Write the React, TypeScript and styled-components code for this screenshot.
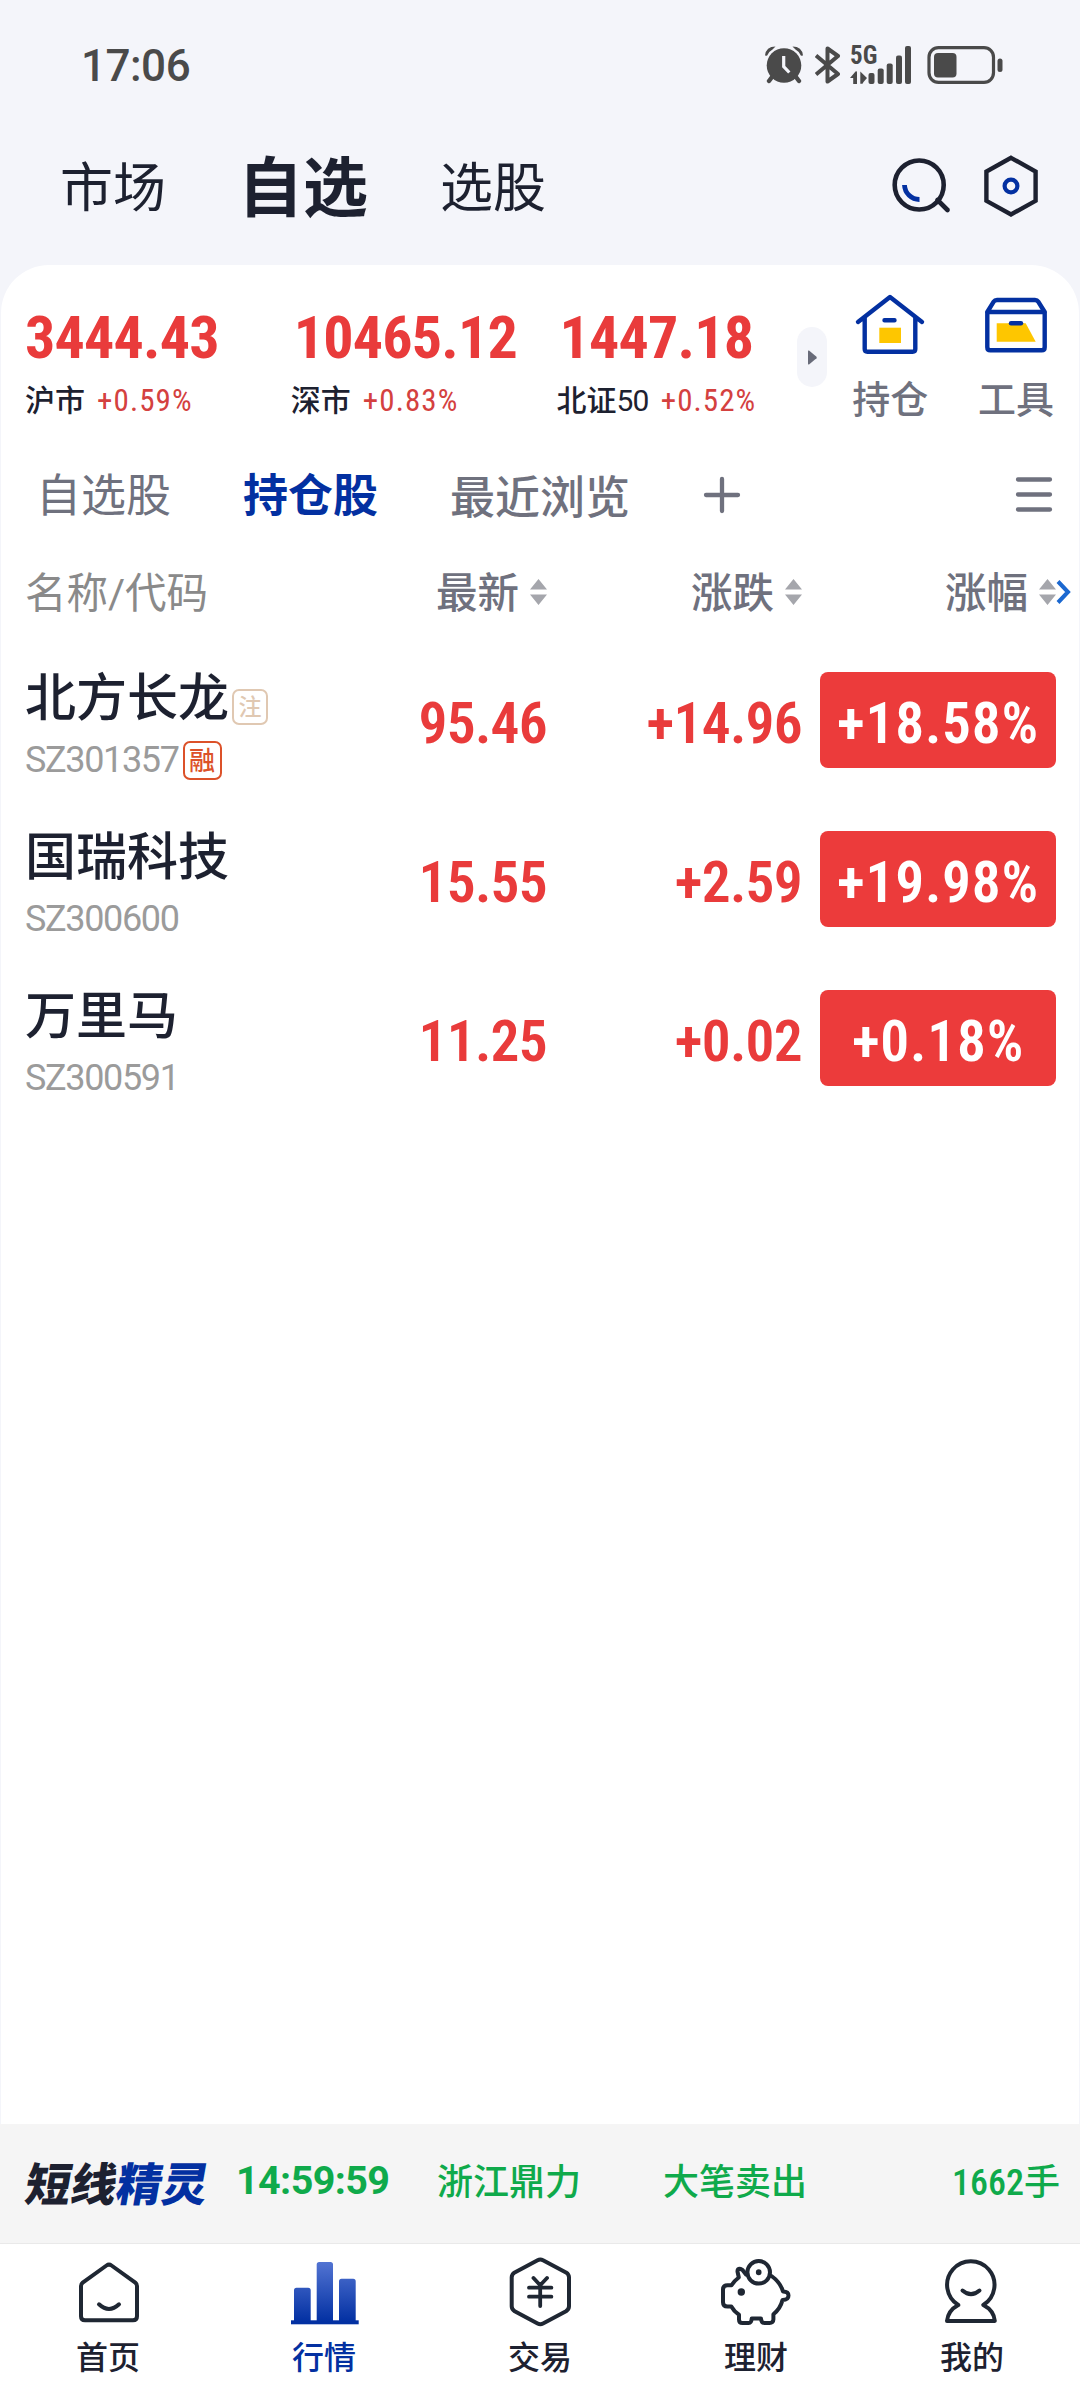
import React from 'react';
import styled, { createGlobalStyle } from 'styled-components';

const color = {
  page: '#f4f5fa',
  ink: '#1d2130',
  blue: '#0330a1',
  red: '#e93b3b',
  badge: '#ec3b3b',
  green: '#0faa4b',
  grey: '#6f717e',
  status: '#4a4a4a',
  yellow: '#fec600',
};

const GlobalStyle = createGlobalStyle`
  * { box-sizing: border-box; }
  body {
    margin: 0;
    background: ${color.page};
    font-family: Roboto, "Noto Sans CJK SC", sans-serif;
    color: ${color.ink};
  }
  svg { display: block; flex: none; }
`;

const Screen = styled.div`
  width: 1080px;
  height: 2388px;
  display: flex;
  flex-direction: column;
  overflow: hidden;
  white-space: nowrap;
`;

/* ---------- status bar ---------- */

const StatusBar = styled.div`
  height: 130px;
  padding: 0 76px 0 81px;
  display: flex;
  align-items: center;
  justify-content: space-between;
`;

const Clock = styled.span`
  font-size: 44px;
  font-weight: 500;
  letter-spacing: -0.5px;
  padding-top: 1px;
  color: ${color.status};
`;

const StatusIcons = styled.div`
  display: flex;
  align-items: center;
`;

const Signal = styled.div`
  width: 38px;
  height: 40px;
  margin: 0 39px 0 9px;
  position: relative;
`;

const SignalLabel = styled.span`
  position: absolute;
  left: 0;
  top: 0;
  font-size: 25px;
  line-height: 21px;
  font-weight: 700;
  font-stretch: 75%;
  color: ${color.status};
`;

const SignalBars = styled.svg`
  position: absolute;
  left: 0;
  top: 0;
`;

/* ---------- header ---------- */

const Header = styled.header`
  height: 112px;
  margin-bottom: 23px;
  padding: 1px 38px 0 60px;
  display: flex;
  align-items: center;
`;

const HeaderTab = styled.span<{ $active?: boolean }>`
  font-size: ${(p) => (p.$active ? 65 : 53)}px;
  font-weight: ${(p) => (p.$active ? 700 : 400)};
  line-height: 80px;
  margin-right: ${(p) => (p.$active ? 72 : 72)}px;
  padding-top: 4px;
`;

const HeaderActions = styled.div`
  margin-left: auto;
  display: flex;
  gap: 27px;
`;

/* ---------- main card ---------- */

const Card = styled.main`
  flex: 1;
  margin: 0 1px;
  background: #fff;
  border-radius: 48px 48px 0 0;
  display: flex;
  flex-direction: column;
`;

const IndexBar = styled.section`
  height: 165px;
  padding-left: 24px;
  display: flex;
`;

const IndexItem = styled.div<{ $width: number }>`
  width: ${(p) => p.$width}px;
  padding-top: 43px;
`;

const IndexValue = styled.div<{ $indent: number }>`
  padding-left: ${(p) => p.$indent}px;
  font-size: 60px;
  line-height: 60px;
  font-weight: 700;
  font-stretch: 75%;
  letter-spacing: -0.8px;
  color: ${color.red};
`;

const IndexMeta = styled.div`
  margin-top: 13px;
  display: flex;
  align-items: center;
  font-size: 30px;
  line-height: 40px;
  font-weight: 500;
`;

const IndexDigits = styled.span`
  font-weight: 400;
  letter-spacing: -0.8px;
`;

const IndexChange = styled.span`
  margin-left: 12px;
  font-size: 31px;
  font-weight: 400;
  font-stretch: 75%;
  letter-spacing: 1.1px;
  color: #d4413f;
`;

const Expand = styled.button`
  width: 30px;
  height: 60px;
  margin-top: 62px;
  padding: 0;
  border: 0;
  border-radius: 15px;
  background: ${color.page};
  display: flex;
  align-items: center;
  justify-content: center;
`;

const Shortcut = styled.div`
  width: 126px;
  padding-top: 26px;
  display: flex;
  flex-direction: column;
  align-items: center;
  font-size: 38px;
  line-height: 50px;
  font-weight: 500;
  color: ${color.grey};
  gap: 18px;
`;

/* ---------- list tabs ---------- */

const Tabs = styled.nav`
  height: 130px;
  padding: 0 26px 0 35px;
  display: flex;
  align-items: center;
`;

const Tab = styled.span<{ $active?: boolean; $medium?: boolean; $gap: number }>`
  font-size: 45px;
  line-height: 60px;
  font-weight: ${(p) => (p.$active ? 700 : p.$medium ? 500 : 400)};
  color: ${(p) => (p.$active ? color.blue : color.grey)};
  margin-right: ${(p) => p.$gap}px;
  padding-top: ${(p) => (p.$medium ? 7 : 3)}px;
`;

const MenuButton = styled.div`
  margin-left: auto;
`;

/* ---------- table ---------- */

const tableColumns = '265px 257px 255px 18px 236px';

const TableHead = styled.div`
  height: 80px;
  padding: 0 0 16px 24px;
  display: grid;
  grid-template-columns: ${tableColumns} 15px;
  align-items: center;
  font-size: 41.5px;
  line-height: 60px;
  font-weight: 500;
  color: ${color.grey};
`;

const HeadName = styled.span`
  color: #8a8a8a;
  font-weight: 400;
  padding-top: 4px;
`;

const HeadCell = styled.span<{ $wide?: boolean }>`
  grid-column: ${(p) => (p.$wide ? 'span 2' : 'auto')};
  display: flex;
  align-items: center;
  justify-content: flex-end;
  gap: 11px;
`;

const HeadLabel = styled.span`
  padding-top: 4px;
`;

const Row = styled.div`
  height: 159px;
  padding-left: 24px;
  display: grid;
  grid-template-columns: ${tableColumns};
`;

const Stock = styled.div`
  padding-top: 29px;
`;

const StockName = styled.div`
  display: flex;
  align-items: center;
  font-size: 51px;
  line-height: 60px;
  font-weight: 500;
`;

const StockCode = styled.div`
  margin-top: 11px;
  height: 40px;
  display: flex;
  align-items: center;
  font-size: 36px;
  letter-spacing: -1.35px;
  color: #9b9b9b;
`;

const Tag = styled.span<{ $tone: string; $size: number; $raise?: number; $gap: number }>`
  width: ${(p) => p.$size}px;
  height: ${(p) => p.$size}px;
  margin: ${(p) => p.$raise ?? 0}px 0 0 ${(p) => p.$gap}px;
  border: 2px solid ${(p) => p.$tone};
  border-radius: 7px;
  display: flex;
  align-items: center;
  justify-content: center;
  font-size: ${(p) => p.$size - 13}px;
  line-height: 1;
  letter-spacing: 0;
  padding-top: 1px;
  font-weight: 500;
  color: ${(p) => p.$tone};
`;

const Quote = styled.div`
  padding-top: 54px;
  text-align: right;
  font-size: 57.5px;
  line-height: 60px;
  font-weight: 600;
  font-stretch: 75%;
  letter-spacing: -0.7px;
  color: ${color.red};
`;

const Badge = styled.div`
  grid-column: 5;
  height: 96px;
  margin-top: 32px;
  padding-top: 7px;
  border-radius: 8px;
  background: ${color.badge};
  display: flex;
  align-items: center;
  justify-content: center;
  font-size: 57.5px;
  font-weight: 600;
  font-stretch: 75%;
  letter-spacing: 0.8px;
  color: #fff;
`;

/* ---------- ticker ---------- */

const Ticker = styled.section`
  height: 120px;
  padding: 2px 20px 0 24px;
  background: #f5f5f5;
  border-bottom: 1px solid #e9e9e9;
  display: grid;
  grid-template-columns: 212px 201px 226px 200px 1fr;
  align-items: center;
  font-size: 36px;
  line-height: 60px;
  font-weight: 500;
  color: ${color.green};
`;

const TickerLogo = styled.span`
  font-size: 45.5px;
  font-weight: 900;
  color: ${color.ink};
  transform: skewX(-10deg);
  padding: 2px 0 0 2px;
  b { font-weight: 900; color: ${color.blue}; }
`;

const TickerTime = styled.span`
  font-size: 39.5px;
  font-weight: 700;
  letter-spacing: -0.6px;
  padding-bottom: 8px;
`;

const TickerText = styled.span<{ $end?: boolean }>`
  text-align: ${(p) => (p.$end ? 'right' : 'left')};
  font-stretch: 75%;
  padding-bottom: 4px;
`;

/* ---------- bottom navigation ---------- */

const BottomNav = styled.nav`
  height: 144px;
  background: #fff;
  display: grid;
  grid-template-columns: repeat(5, 1fr);
`;

const NavItem = styled.div<{ $active?: boolean }>`
  padding-top: 12px;
  display: flex;
  flex-direction: column;
  align-items: center;
  gap: 10px;
  font-size: 32px;
  line-height: 40px;
  font-weight: 500;
  color: ${(p) => (p.$active ? color.blue : color.ink)};
`;

/* ---------- icons ---------- */

const NavSvg = styled.svg.attrs({ width: 72, height: 72, viewBox: '0 0 72 72' })`
  fill: none;
  stroke: #1f2733;
  stroke-width: 4;
  stroke-linecap: round;
  stroke-linejoin: round;
`;

const ShortcutSvg = styled.svg.attrs({ width: 72, height: 66, viewBox: '0 0 72 66' })`
  fill: none;
  stroke: ${color.blue};
  stroke-width: 4.4;
  stroke-linecap: round;
  stroke-linejoin: round;
`;

const AlarmSvg = styled.svg`
  margin-right: 12px;
`;

const AlarmIcon = () => (
  <AlarmSvg width="38" height="38" viewBox="0 0 38 38" fill={color.status}>
    <circle cx="19" cy="19.5" r="17.3" />
    <path d="M7 31 4 35M31 31l3 4" stroke={color.status} strokeWidth="4.4" strokeLinecap="round" />
    <path d="M0 9.500Q1 0.500 10.500 0.500L7.500 3.600Q3.500 5.800 2 9.800ZM38 9.500Q37 0.500 27.500 0.500L30.500 3.600Q34.500 5.800 36 9.800Z" />
    <path d="M18.700 10v10.500l5.600 6" fill="none" stroke={color.page} strokeWidth="3.2" />
  </AlarmSvg>
);

const BluetoothIcon = () => (
  <svg width="26" height="38" viewBox="0 0 26 38" fill="none" stroke={color.status} strokeWidth="4" strokeLinejoin="round">
    <path d="M1 9.500 23 28 12.500 35.500V2.500L23 10 1 28.500" />
  </svg>
);

const SignalIcon = () => (
  <SignalBars width="64" height="40" viewBox="0 0 64 40" fill={color.status}>
    <path d="M0 33 5.500 26.500q1.500-1 1.500 1V39H3.200V33ZM10.300 26.500l6.700 6.500-3.500 4-1 1.800h-2.200Z" />
    <rect x="18.500" y="28" width="6" height="11" rx="2" />
    <rect x="27.700" y="23.500" width="6" height="15.500" rx="2" />
    <rect x="36.700" y="18.500" width="6" height="20.500" rx="2" />
    <rect x="46" y="10.500" width="6" height="28.500" rx="2" />
    <rect x="55" y="1" width="6" height="38" rx="2" />
  </SignalBars>
);

const BatteryIcon = () => (
  <svg width="77" height="38" viewBox="0 0 77 38" fill={color.status}>
    <rect x="2" y="1.700" width="64.500" height="34.600" rx="9.500" fill="none" stroke={color.status} strokeWidth="3.200" />
    <rect x="7" y="7" width="22.500" height="24.500" rx="4" />
    <rect x="70.500" y="12.500" width="5" height="13.500" rx="2.500" />
  </svg>
);

const SearchIcon = () => (
  <svg width="64" height="66" viewBox="0 -3 64 66" fill="none" strokeWidth="4.600">
    <circle cx="30.200" cy="28" r="24.500" stroke={color.ink} />
    <path d="M48.500 43 58.500 53" stroke={color.ink} strokeLinecap="round" />
    <path d="M15.500 28A15 15 0 0 0 30.500 42.500" stroke={color.blue} strokeWidth="4.800" />
  </svg>
);

const HexIcon = () => (
  <svg width="62" height="66" viewBox="0 0 62 66" fill="none">
    <path d="M31 3.800 55.600 17.500v29.300L31 60.500 6.400 46.800V17.500Z" stroke={color.ink} strokeWidth="4.400" />
    <circle cx="31" cy="32" r="6.400" stroke={color.blue} strokeWidth="4.200" />
  </svg>
);

const HoldingIcon = () => (
  <ShortcutSvg>
    <path d="M4 31 36 6l32 25M10.700 27v31q0 2.700 2.700 2.700h45.200q2.700 0 2.700-2.700V27M30.500 29.300h10" />
    <rect x="25.300" y="36.700" width="21.700" height="15.300" fill={color.yellow} stroke="none" />
  </ShortcutSvg>
);

const ToolboxIcon = () => (
  <ShortcutSvg>
    <path d="M7.300 21v35.300q0 3 3 3h51.400q3 0 3-3V21ZM7.300 21l6.400-10.300Q14.800 9 17 9h38q2.200 0 3.300 1.700L64.700 21" />
    <path d="M16.700 32.300h29l10 18.400h-39Z" fill={color.yellow} stroke="none" />
    <path d="M31 32.300h10" />
  </ShortcutSvg>
);

const PlusIcon = () => (
  <svg width="38" height="38" viewBox="0 0 38 38" stroke={color.grey} strokeWidth="4.300" strokeLinecap="round">
    <path d="M19 3v32M3 19h32" />
  </svg>
);

const MenuIcon = () => (
  <svg width="38" height="38" viewBox="0 0 38 38" stroke={color.grey} strokeWidth="4.300" strokeLinecap="round">
    <path d="M3 3.500h32M3 18.500h32M3 33.500h32" />
  </svg>
);

const SortIcon = () => (
  <svg width="17" height="26" viewBox="0 0 17 26" fill="#a5a6ac">
    <path d="M8.500 0 17 10.500H0ZM0 15.500h17L8.500 26Z" />
  </svg>
);

const ChevronIcon = () => (
  <svg width="15" height="24" viewBox="0 0 15 24" fill="none" stroke="#1b68d0" strokeWidth="4">
    <path d="M2 1.500 12 12 2 22.500" />
  </svg>
);

const ArrowIcon = () => (
  <svg width="9" height="15" viewBox="0 0 9 15" fill="#686b79">
    <path d="M0 1.200Q0 0 1 .6L8.500 6.800Q9 7.500 8.500 8.200L1 14.400Q0 15 0 13.800Z" />
  </svg>
);

const HomeNav = () => (
  <NavSvg>
    <path d="M9 30q0-2 1.700-3.400L34.500 9.500q2.500-1.800 5 0l23.800 17.100Q65 28 65 30v30.300q0 4-4 4H13q-4 0-4-4Z" />
    <path d="M27 48.300q10 9.400 20 0" />
  </NavSvg>
);

const MarketNav = () => (
  <svg width="72" height="72" viewBox="0 0 72 72" fill="url(#marketBars)">
    <defs>
      <linearGradient id="marketBars" gradientUnits="userSpaceOnUse" x1="0" y1="4" x2="0" y2="66">
        <stop offset="0" stopColor="#5576d4" />
        <stop offset="1" stopColor="#0230a2" />
      </linearGradient>
    </defs>
    <path d="M6 65V34.200q0-2.500 2.500-2.500h11.700q2.500 0 2.500 2.500V65ZM28.700 65V8.500q0-2.500 2.500-2.500h11.300Q45 6 45 8.500V65ZM51 65V25.200q0-2.500 2.500-2.500h11.700q2.500 0 2.500 2.500V65Z" />
    <rect x="3" y="64.300" width="67.700" height="4" />
  </svg>
);

const TradeNav = () => (
  <NavSvg>
    <path d="M33.600 4.200q2.700-1.500 5.400 0L62 16.400q3 1.900 3 4.900v29q0 3-3 4.900L39 67.400q-2.700 1.500-5.400 0L10.700 55.200q-3-1.900-3-4.900v-29q0-3 3-4.900Z" />
    <path d="M29.500 22l6.700 7.300L43 22M25 31.700h22.400M25 40.700h22.400M36.200 30v20" strokeWidth="3.800" />
  </NavSvg>
);

const WealthNav = () => (
  <NavSvg>
    <circle cx="38.700" cy="16.300" r="11.300" />
    <path d="M26 18.500 22.500 14Q17.500 11 17.500 15.500L18.800 21.500Q14 25 11.500 29.200H7.500Q3 29.200 3 33.500V46.200Q3 50.500 7.500 50.500H11.300Q14 55.500 19 58.700V63.500Q19 67 22.500 67H28.700Q31.500 67 31.700 62.500H41Q41.200 67 44.500 67H49.500Q53.200 67 53.400 63.500V58.200Q60.500 52.500 62.500 44Q68.500 44 68.500 39.500Q68.500 35.500 63 35.500Q60.500 26.500 51.500 20" />
    <path d="M38.700 16.100v.4" strokeWidth="5.600" />
    <circle cx="21.300" cy="36" r="3.700" fill="#1f2733" stroke="none" />
  </NavSvg>
);

const ProfileNav = () => (
  <NavSvg>
    <path d="M22.300 49A23.700 23.700 0 1 1 47.300 49Q58 54.500 58.800 65H11Q12 54.500 22.300 49Z" />
    <path d="M26.500 34.500q8.500 7.400 17 0" />
  </NavSvg>
);

/* ---------- data ---------- */

const indices = [
  { name: '沪市', digits: '', value: '3444.43', change: '+0.59%', width: 266, indent: 0 },
  { name: '深市', digits: '', value: '10465.12', change: '+0.83%', width: 266, indent: 3 },
  { name: '北证', digits: '50', value: '1447.18', change: '+0.52%', width: 241, indent: 3 },
];

const stocks = [
  { name: '北方长龙', code: 'SZ301357', price: '95.46', diff: '+14.96', pct: '+18.58%', note: true, margin: true },
  { name: '国瑞科技', code: 'SZ300600', price: '15.55', diff: '+2.59', pct: '+19.98%' },
  { name: '万里马', code: 'SZ300591', price: '11.25', diff: '+0.02', pct: '+0.18%' },
];

const navItems = [
  { label: '首页', Icon: HomeNav },
  { label: '行情', Icon: MarketNav, active: true },
  { label: '交易', Icon: TradeNav },
  { label: '理财', Icon: WealthNav },
  { label: '我的', Icon: ProfileNav },
];

export default function App() {
  return (
    <Screen>
      <GlobalStyle />
      <StatusBar>
        <Clock>17:06</Clock>
        <StatusIcons>
          <AlarmIcon />
          <BluetoothIcon />
          <Signal>
            <SignalLabel>5G</SignalLabel>
            <SignalIcon />
          </Signal>
          <BatteryIcon />
        </StatusIcons>
      </StatusBar>

      <Header>
        <HeaderTab>市场</HeaderTab>
        <HeaderTab $active>自选</HeaderTab>
        <HeaderTab>选股</HeaderTab>
        <HeaderActions>
          <SearchIcon />
          <HexIcon />
        </HeaderActions>
      </Header>

      <Card>
        <IndexBar>
          {indices.map((i) => (
            <IndexItem key={i.name} $width={i.width}>
              <IndexValue $indent={i.indent}>{i.value}</IndexValue>
              <IndexMeta>
                {i.name}
                {i.digits && <IndexDigits>{i.digits}</IndexDigits>}
                <IndexChange>{i.change}</IndexChange>
              </IndexMeta>
            </IndexItem>
          ))}
          <Expand>
            <ArrowIcon />
          </Expand>
          <Shortcut>
            <HoldingIcon />
            持仓
          </Shortcut>
          <Shortcut>
            <ToolboxIcon />
            工具
          </Shortcut>
        </IndexBar>

        <Tabs>
          <Tab $gap={72}>自选股</Tab>
          <Tab $gap={72} $active>持仓股</Tab>
          <Tab $gap={73} $medium>最近浏览</Tab>
          <PlusIcon />
          <MenuButton>
            <MenuIcon />
          </MenuButton>
        </Tabs>

        <TableHead>
          <HeadName>名称/代码</HeadName>
          <HeadCell><HeadLabel>最新</HeadLabel><SortIcon /></HeadCell>
          <HeadCell><HeadLabel>涨跌</HeadLabel><SortIcon /></HeadCell>
          <HeadCell $wide><HeadLabel>涨幅</HeadLabel><SortIcon /></HeadCell>
          <ChevronIcon />
        </TableHead>

        {stocks.map((s) => (
          <Row key={s.code}>
            <Stock>
              <StockName>
                {s.name}
                {s.note && <Tag $tone="#e0c8b2" $size={36} $raise={15} $gap={3}>注</Tag>}
              </StockName>
              <StockCode>
                {s.code}
                {s.margin && <Tag $tone="#dc5129" $size={39} $raise={1} $gap={4}>融</Tag>}
              </StockCode>
            </Stock>
            <Quote>{s.price}</Quote>
            <Quote>{s.diff}</Quote>
            <Badge>{s.pct}</Badge>
          </Row>
        ))}
      </Card>

      <Ticker>
        <TickerLogo>短线<b>精灵</b></TickerLogo>
        <TickerTime>14:59:59</TickerTime>
        <TickerText>浙江鼎力</TickerText>
        <TickerText>大笔卖出</TickerText>
        <TickerText $end>1662手</TickerText>
      </Ticker>

      <BottomNav>
        {navItems.map(({ label, Icon, active }) => (
          <NavItem key={label} $active={active}>
            <Icon />
            {label}
          </NavItem>
        ))}
      </BottomNav>
    </Screen>
  );
}
